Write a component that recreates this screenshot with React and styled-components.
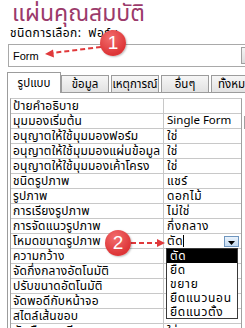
import React from 'react';
import styled, { createGlobalStyle } from 'styled-components';

const GlobalStyle = createGlobalStyle`
  html, body {
    margin: 0;
    padding: 0;
    background: #fff;
  }
  body {
    font-family: Tahoma, "Noto Sans Thai", "Noto Sans", "DejaVu Sans", sans-serif;
    color: #000;
  }
`;

const Sheet = styled.div`
  position: relative;
  width: 245px;
  height: 328px;
  overflow: hidden;
  padding-top: 2px;
  box-sizing: border-box;
`;

const Title = styled.div`
  height: 24px;
  padding-left: 12px;
  font-size: 23px;
  line-height: 24px;
  color: #9b3a6b;
  white-space: nowrap;
`;

const Subtitle = styled.div`
  height: 14px;
  padding-left: 10px;
  font-size: 12px;
  line-height: 14px;
  letter-spacing: 0.4px;
  white-space: nowrap;
`;

const Combo = styled.div`
  display: flex;
  align-items: center;
  margin: 4px 0 0 8px;
  width: 260px;
  height: 23px;
  box-sizing: border-box;
  border: 1px solid #a9a9a9;
  padding: 0 2px 0 4px;
`;

const ComboText = styled.span`
  flex: 1;
  font-family: "Liberation Sans", Arial, sans-serif;
  font-size: 11px;
`;

const ComboButton = styled.div`
  width: 16px;
  height: 17px;
  margin-left: auto;
  margin-right: 8px;
  box-sizing: border-box;
  border: 1px solid #a0a0a0;
  background: linear-gradient(#f4f4f4, #dcdcdc);
`;

const Tabs = styled.div`
  display: flex;
  align-items: flex-end;
  gap: 2px;
  margin: 5px 0 0 7px;
  height: 21px;
  position: relative;
  z-index: 1;
`;

const Tab = styled.div`
  flex: none;
  width: ${({ active }) => (active ? '54px' : '48px')};
  height: ${({ active }) => (active ? '21px' : '18px')};
  margin-right: ${({ active }) => (active ? '-2px' : '0')};
  box-sizing: border-box;
  border: 1px solid #9c9c9c;
  border-bottom: ${({ active }) => (active ? 'none' : '1px solid #9c9c9c')};
  background: ${({ active }) => (active ? '#fff' : 'linear-gradient(#f6f6f6, #e2e2e2)')};
  display: flex;
  align-items: center;
  justify-content: center;
  font-size: 11.5px;
  white-space: nowrap;
  overflow: hidden;
`;

const Panel = styled.div`
  margin: -1px 0 0 7px;
  border-top: 1px solid #9c9c9c;
  border-left: 1px solid #9c9c9c;
  padding: 5px 0 0 2px;
  display: flex;
  height: 240px;
`;

const Grid = styled.div`
  width: 230px;
  flex: none;
  border-left: 1px solid #a0a0a0;
  border-top: 1px solid #c8c8c8;
  border-right: 1px solid #a0a0a0;
  align-self: flex-start;
`;

const Row = styled.div`
  display: grid;
  grid-template-columns: 153px 1fr;
  height: 15px;
  box-sizing: border-box;
  border-bottom: 1px solid #c8c8c8;
  font-size: 12px;
  line-height: 14px;
`;

const Name = styled.div`
  padding-left: 2px;
  border-right: 1px solid #c8c8c8;
  white-space: nowrap;
  letter-spacing: 0.2px;
`;

const Value = styled.div`
  display: flex;
  align-items: center;
  padding-left: 3px;
  white-space: nowrap;
  font-size: ${({ latin }) => (latin ? '11.5px' : '12px')};
  letter-spacing: ${({ latin }) => (latin ? '0' : '0.5px')};
`;

const Caret = styled.span`
  width: 1px;
  height: 12px;
  background: #000;
`;

const DropButton = styled.div`
  margin-left: auto;
  margin-right: 2px;
  width: 15px;
  height: 11px;
  box-sizing: border-box;
  border: 1px solid #6f96bf;
  background: linear-gradient(#eaf3fc, #c3daf1);
  display: flex;
  align-items: flex-end;
  justify-content: center;
  padding-bottom: 1px;
`;

const Side = styled.div`
  flex: 1;
  padding: 18px 0 0 2px;
`;

const SideBox = styled.div`
  width: 10px;
  height: 11px;
  border: 1px solid #a0a0a0;
  background: #f4f4f4;
`;

const DropList = styled.div`
  position: absolute;
  left: 166px;
  top: 248px;
  width: 72px;
  height: 71px;
  box-sizing: border-box;
  border: 1px solid #3a3a3a;
  background: #fff;
  z-index: 3;
`;

const DropItem = styled.div`
  height: 14px;
  line-height: 14px;
  font-size: 12px;
  letter-spacing: 0.7px;
  padding-left: 3px;
  background: ${({ selected }) => (selected ? '#000' : 'transparent')};
  color: ${({ selected }) => (selected ? '#fff' : '#000')};
  white-space: nowrap;
`;

const Badge = styled.div`
  position: absolute;
  left: ${({ x }) => x}px;
  top: ${({ y }) => y}px;
  width: 26px;
  height: 26px;
  border-radius: 50%;
  background: radial-gradient(circle at 40% 30%, #f26d6d, #dd3537 70%);
  box-shadow: 1px 1px 2px rgba(0, 0, 0, 0.25);
  color: #fff;
  font-family: "Liberation Sans", Arial, sans-serif;
  font-size: 19px;
  line-height: 26px;
  text-align: center;
  z-index: 4;
`;

const Overlay = styled.svg`
  position: absolute;
  left: 0;
  top: 0;
  z-index: 4;
  pointer-events: none;
`;

// values hidden under the open drop-down are left out
const rows = [
  ['ป้ายคำอธิบาย', ''],
  ['มุมมองเริ่มต้น', 'Single Form', false, true],
  ['อนุญาตให้ใช้มุมมองฟอร์ม', 'ใช่'],
  ['อนุญาตให้ใช้มุมมองแผ่นข้อมูล', 'ใช่'],
  ['อนุญาตให้ใช้มุมมองเค้าโครง', 'ใช่'],
  ['ชนิดรูปภาพ', 'แชร์'],
  ['รูปภาพ', 'ดอกไม้'],
  ['การเรียงรูปภาพ', 'ไม่ใช่'],
  ['การจัดแนวรูปภาพ', 'กึ่งกลาง'],
  ['โหมดขนาดรูปภาพ', 'ตัด', true],
  ['ความกว้าง', ''],
  ['จัดกึ่งกลางอัตโนมัติ', ''],
  ['ปรับขนาดอัตโนมัติ', ''],
  ['จัดพอดีกับหน้าจอ', ''],
  ['สไตล์เส้นขอบ', ''],
  ['ตัวเลือกระเบียน', 'ใช่'],
];

const tabs = ['รูปแบบ', 'ข้อมูล', 'เหตุการณ์', 'อื่นๆ', 'ทั้งหมด'];
const options = ['ตัด', 'ยืด', 'ขยาย', 'ยืดแนวนอน', 'ยืดแนวตั้ง'];

const App = () => (
  <Sheet>
    <GlobalStyle />
    <Title>แผ่นคุณสมบัติ</Title>
    <Subtitle>ชนิดการเลือก:&nbsp; ฟอร์ม</Subtitle>
    <Combo>
      <ComboText>Form</ComboText>
      <ComboButton />
    </Combo>
    <Tabs>
      {tabs.map((t, i) => (
        <Tab key={t} active={i === 0}>{t}</Tab>
      ))}
    </Tabs>
    <Panel>
      <Grid>
        {rows.map(([name, value, editing, latin]) => (
          <Row key={name}>
            <Name>{name}</Name>
            <Value latin={latin}>
              {value}
              {editing && <Caret />}
              {editing && (
                <DropButton>
                  <svg width="7" height="4" viewBox="0 0 7 4">
                    <path d="M0 0h7L3.5 4z" fill="#000" />
                  </svg>
                </DropButton>
              )}
            </Value>
          </Row>
        ))}
      </Grid>
      <Side>
        <SideBox />
      </Side>
    </Panel>

    <DropList>
      {options.map((o, i) => (
        <DropItem key={o} selected={i === 0}>{o}</DropItem>
      ))}
    </DropList>

    <Overlay width="245" height="328">
      <g stroke="#e0393b" strokeWidth="2" strokeDasharray="5 3" fill="none">
        <line x1="101" y1="47" x2="52" y2="53" />
        <line x1="131" y1="243" x2="158" y2="243" />
      </g>
      <path d="M45 54 L53 49.5 L54 57.5 Z" fill="#e0393b" />
      <path d="M165 243 L157 239 L157 247 Z" fill="#e0393b" />
    </Overlay>
    <Badge x={100} y={30}>1</Badge>
    <Badge x={105} y={230}>2</Badge>
  </Sheet>
);

export default App;
